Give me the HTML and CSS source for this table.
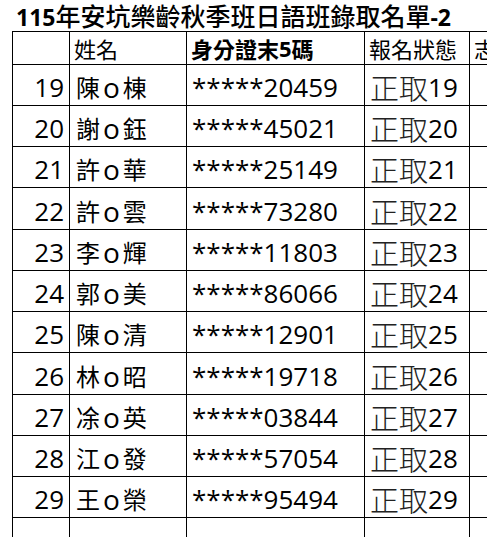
FILE: index.html
```html
<!DOCTYPE html>
<html lang="zh-Hant">
<head>
<meta charset="utf-8">
<title>115年安坑樂齡秋季班日語班錄取名單-2</title>
<link rel="stylesheet" href="styles.css">
</head>
<body>
<div class="title"><span class="tnum">115</span>年安坑樂齡秋季班日語班錄取名單<span class="tnum">-2</span></div>
<div class="sheet">
  <div class="c hd"></div>
  <div class="c hd cjk">姓名</div>
  <div class="c hd cjk b">身分證末<span class="hnum">5</span>碼</div>
  <div class="c hd cjk">報名狀態</div>
  <div class="c hd cjk">志願</div>

  <div class="c num">19</div><div class="c name">陳<span class="o">o</span>棟</div><div class="c id">*****20459</div><div class="c st"><span class="zq">正取</span>19</div><div class="c"></div>
  <div class="c num">20</div><div class="c name">謝<span class="o">o</span>鈺</div><div class="c id">*****45021</div><div class="c st"><span class="zq">正取</span>20</div><div class="c"></div>
  <div class="c num">21</div><div class="c name">許<span class="o">o</span>華</div><div class="c id">*****25149</div><div class="c st"><span class="zq">正取</span>21</div><div class="c"></div>
  <div class="c num">22</div><div class="c name">許<span class="o">o</span>雲</div><div class="c id">*****73280</div><div class="c st"><span class="zq">正取</span>22</div><div class="c"></div>
  <div class="c num">23</div><div class="c name">李<span class="o">o</span>輝</div><div class="c id">*****11803</div><div class="c st"><span class="zq">正取</span>23</div><div class="c"></div>
  <div class="c num">24</div><div class="c name">郭<span class="o">o</span>美</div><div class="c id">*****86066</div><div class="c st"><span class="zq">正取</span>24</div><div class="c"></div>
  <div class="c num">25</div><div class="c name">陳<span class="o">o</span>清</div><div class="c id">*****12901</div><div class="c st"><span class="zq">正取</span>25</div><div class="c"></div>
  <div class="c num">26</div><div class="c name">林<span class="o">o</span>昭</div><div class="c id">*****19718</div><div class="c st"><span class="zq">正取</span>26</div><div class="c"></div>
  <div class="c num">27</div><div class="c name">凃<span class="o">o</span>英</div><div class="c id">*****03844</div><div class="c st"><span class="zq">正取</span>27</div><div class="c"></div>
  <div class="c num">28</div><div class="c name">江<span class="o">o</span>發</div><div class="c id">*****57054</div><div class="c st"><span class="zq">正取</span>28</div><div class="c"></div>
  <div class="c num">29</div><div class="c name">王<span class="o">o</span>榮</div><div class="c id">*****95494</div><div class="c st"><span class="zq">正取</span>29</div><div class="c"></div>

  <div class="c"></div><div class="c"></div><div class="c"></div><div class="c"></div><div class="c"></div>
</div>
</body>
</html>
```
FILE: styles.css
```css
html, body {
  margin: 0;
  padding: 0;
  background: #fff;
  width: 487px;
  height: 537px;
  overflow: hidden;
}
body {
  font-family: "Open Sans", "Noto Sans CJK TC", sans-serif;
  color: #000;
}
.title {
  height: 31px;
  padding-left: 16px;
  font-family: "Noto Sans CJK TC", sans-serif;
  font-size: 25px;
  line-height: 31px;
  white-space: nowrap;
  font-weight: 500;
}
.tnum {
  font-family: "Open Sans", sans-serif;
  font-weight: 700;
  font-size: 23px;
  line-height: 1;
}
.sheet {
  margin-left: 12px;
  display: grid;
  width: max-content;
  grid-template-columns: 56px 116px 177px 104px 120px;
  grid-template-rows: 32px 40px 40px 40px 41px 40px 40px 40px 41px 40px 40px 40px 40px;
  gap: 1px;
  padding: 1px 0 0 1px;
  background: #000;
}
.c {
  background: #fff;
  display: flex;
  align-items: flex-end;
  white-space: nowrap;
  padding: 0 0 3px 5px;
  line-height: 30px;
  font-size: 26px;
}
.hd {
  font-size: 22px;
  line-height: 28px;
  padding-bottom: 2px;
  padding-left: 4px;
}
.cjk {
  font-family: "Noto Sans CJK TC", sans-serif;
}
.b {
  font-weight: 700;
}
.hnum {
  font-family: "Open Sans", sans-serif;
  font-weight: 700;
}
.num {
  justify-content: flex-end;
  padding: 0 5px 3px 0;
}
.name {
  font-family: "Noto Sans CJK TC", sans-serif;
  font-size: 24px;
  padding-left: 6px;
}
.o {
  font-family: "Open Sans", sans-serif;
  font-size: 28px;
  margin: 0 3px;
}
.id {
  padding-left: 5px;
}
.st {
  padding-left: 5px;
}
.zq {
  font-family: "Noto Sans CJK TC", sans-serif;
  font-weight: 300;
  font-size: 29px;
  color: #222;
}
```
